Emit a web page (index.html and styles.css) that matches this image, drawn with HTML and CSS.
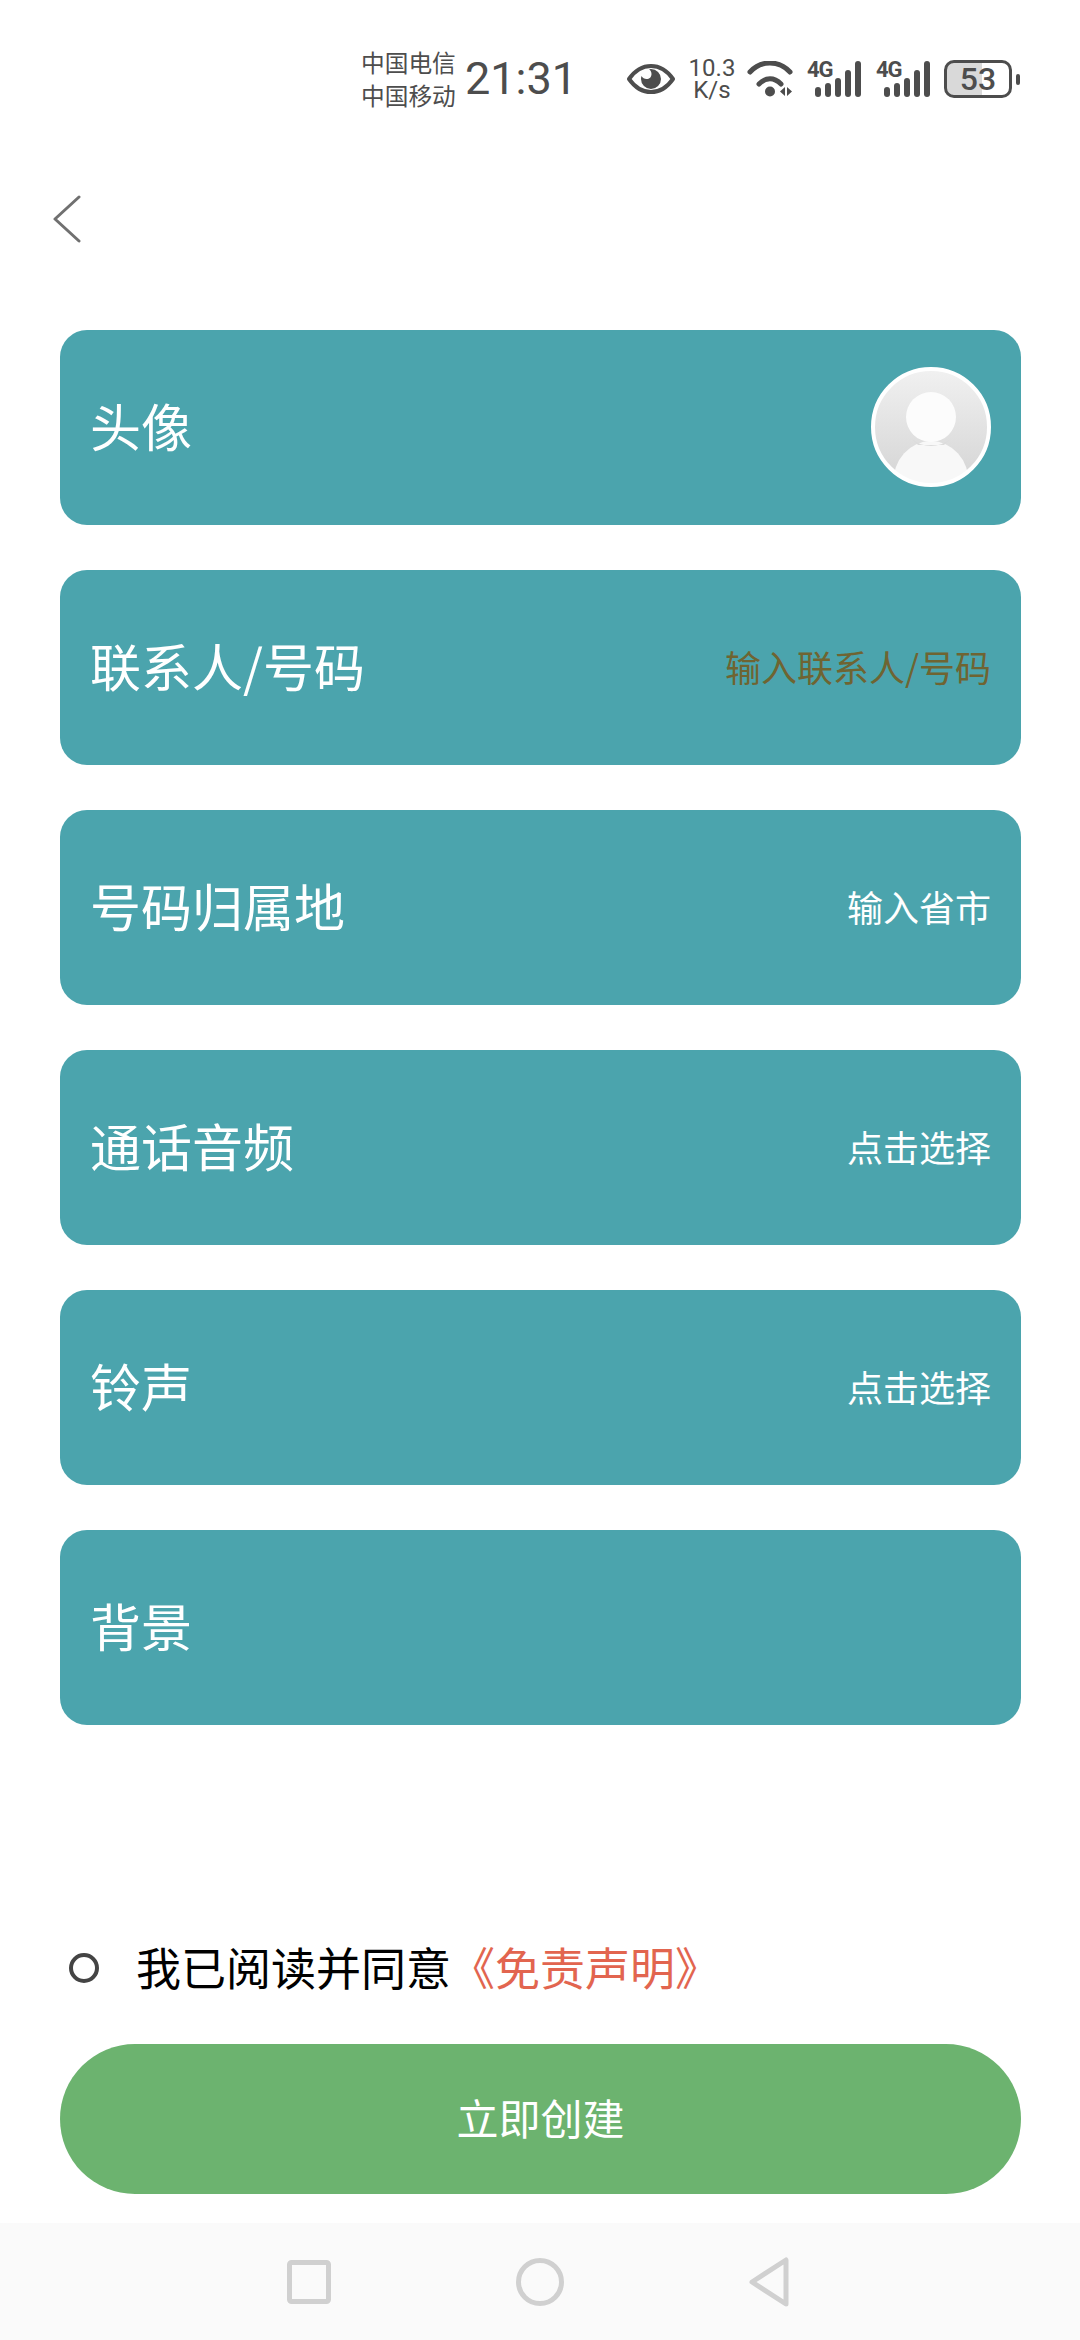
FILE: index.html
```html
<!DOCTYPE html>
<html lang="zh-CN">
<head>
  <meta charset="UTF-8" />
  <meta name="viewport" content="width=device-width, initial-scale=1.0"/>
  <title>立即创建</title>
  <link rel="stylesheet" href="styles.css">
</head>
<body>
  <div class="page">
    <div class="statusbar">
      <div class="carriers">
        <span>中国电信</span>
        <span>中国移动</span>
      </div>
      <div class="clock">21:31</div>
      <svg class="eye" width="48" height="30" viewBox="0 0 48 30">
        <path d="M2 15C9 5 16 2 24 2s15 3 22 13c-7 10-14 13-22 13S9 25 2 15z" fill="none" stroke="#4d4d4d" stroke-width="4" stroke-linejoin="round"/>
        <path d="M24 5a10 10 0 1 1-10 10c0-1 .2-2 .5-3 1 2 3 3 5 3 3 0 5-2 5-5 0-2-1-4-2.500-4.800z" fill="#4d4d4d"/>
      </svg>
      <div class="speed">
        <span>10.3</span>
        <span>K/s</span>
      </div>
      <svg class="wifi" width="46" height="36" viewBox="0 0 46 36">
        <path d="M3 11C14 -1 32 -1 43 11" fill="none" stroke="#4d4d4d" stroke-width="5" stroke-linecap="round"/>
        <path d="M12 23c7-7 15-7 22 0" fill="none" stroke="#4d4d4d" stroke-width="5" stroke-linecap="round"/>
        <circle cx="23" cy="30.500" r="5" fill="#4d4d4d"/>
        <path d="M38 26v9l-5-4.500zM40 26v9l5-4.500z" fill="#4d4d4d"/>
      </svg>
      <div class="signal">
        <span class="signal-label">4G</span>
        <div class="bars">
          <i class="bar bar-1"></i><i class="bar bar-2"></i><i class="bar bar-3"></i><i class="bar bar-4"></i><i class="bar bar-5"></i>
        </div>
      </div>
      <div class="signal">
        <span class="signal-label">4G</span>
        <div class="bars">
          <i class="bar bar-1"></i><i class="bar bar-2"></i><i class="bar bar-3"></i><i class="bar bar-4"></i><i class="bar bar-5"></i>
        </div>
      </div>
      <div class="battery">
        <div class="battery-body">53</div>
        <div class="battery-nub"></div>
      </div>
    </div>

    <div class="topbar">
      <svg width="30" height="48" viewBox="0 0 30 48">
        <path d="M27 2L3 24l24 22" fill="none" stroke="#707070" stroke-width="3" stroke-linecap="round" stroke-linejoin="round"/>
      </svg>
    </div>

    <div class="form">
      <div class="row">
        <span class="row-label">头像</span>
        <svg class="avatar" width="120" height="120" viewBox="0 0 120 120">
          <defs>
            <linearGradient id="avatarBg" x1="0" y1="0" x2="0" y2="1">
              <stop offset="0" stop-color="#f1f1f1"/>
              <stop offset="1" stop-color="#d4d4d4"/>
            </linearGradient>
            <clipPath id="avatarClip"><circle cx="60" cy="60" r="58"/></clipPath>
          </defs>
          <circle cx="60" cy="60" r="58" fill="url(#avatarBg)"/>
          <g clip-path="url(#avatarClip)">
            <ellipse cx="60" cy="116" rx="38" ry="42" fill="#f8f8f8"/>
            <path d="M41 72a29 29 0 0 0 38 0l-6 6h-26z" fill="#dcdcdc"/>
            <circle cx="60" cy="50" r="25" fill="#fcfcfc"/>
          </g>
          <circle cx="60" cy="60" r="58" fill="none" stroke="#fff" stroke-width="4"/>
        </svg>
      </div>
      <div class="row">
        <span class="row-label">联系人/号码</span>
        <span class="row-value row-hint">输入联系人/号码</span>
      </div>
      <div class="row">
        <span class="row-label">号码归属地</span>
        <span class="row-value">输入省市</span>
      </div>
      <div class="row">
        <span class="row-label">通话音频</span>
        <span class="row-value">点击选择</span>
      </div>
      <div class="row">
        <span class="row-label">铃声</span>
        <span class="row-value">点击选择</span>
      </div>
      <div class="row">
        <span class="row-label">背景</span>
      </div>
    </div>

    <div class="agree">
      <span class="agree-check"></span>
      <span class="agree-text">我已阅读并同意</span>
      <span class="agree-link">《免责声明》</span>
    </div>

    <button class="create">立即创建</button>

    <div class="navbar">
      <svg width="44" height="44" viewBox="0 0 44 44">
        <rect x="2.500" y="2.500" width="39" height="39" rx="2" fill="none" stroke="#d0d0d0" stroke-width="5"/>
      </svg>
      <svg width="48" height="48" viewBox="0 0 48 48">
        <circle cx="24" cy="24" r="21.500" fill="none" stroke="#d0d0d0" stroke-width="5"/>
      </svg>
      <svg width="40" height="50" viewBox="0 0 40 50">
        <path d="M37 3v44L3 25z" fill="none" stroke="#d0d0d0" stroke-width="5" stroke-linejoin="round"/>
      </svg>
    </div>
  </div>
</body>
</html>
```

FILE: styles.css
```css
* { box-sizing: border-box; }
body { margin: 0; background: #fff; font-family: "Noto Sans CJK SC", "Noto Sans", sans-serif; }
.page { width: 1080px; height: 2340px; display: flex; flex-direction: column; overflow: hidden; }

.statusbar { height: 120px; padding: 38px 0 0 361px; display: flex; align-items: center; color: #4d4d4d; }
.carriers { display: flex; flex-direction: column; font-size: 23.700px; line-height: 33px; width: 95px; white-space: nowrap; }
.clock { margin-left: 9px; width: 112px; font-family: Roboto, sans-serif; font-size: 45px; line-height: 50px; }
.eye { margin-left: 50px; }
.speed { margin-left: 15px; width: 44px; display: flex; flex-direction: column; align-items: center; font-family: Roboto, sans-serif; font-size: 24px; line-height: 22px; }
.wifi { margin-left: 13px; }
.signal { margin-left: 14px; width: 55px; height: 36px; position: relative; }
.signal-label { position: absolute; left: 0; top: -3px; font-family: Roboto, sans-serif; font-weight: 700; font-size: 22px; line-height: 24px; letter-spacing: -1px; }
.bars { position: absolute; left: 8px; bottom: 0; height: 36px; display: flex; align-items: flex-end; gap: 4px; }
.bar { display: block; width: 6px; background: #4d4d4d; border-radius: 3px; }
.bar-1 { height: 10px; }
.bar-2 { height: 14px; }
.bar-3 { height: 19px; }
.bar-4 { height: 27px; }
.bar-5 { height: 36px; }
.battery { margin-left: 13px; display: flex; align-items: center; gap: 4px; }
.battery-body { width: 68px; height: 38px; border: 3px solid #4d4d4d; border-radius: 10px; background: linear-gradient(to right, #d9d9d9 57%, #fff 57%); font-family: Roboto, sans-serif; font-weight: 500; font-size: 32px; line-height: 32px; text-align: center; }
.battery-nub { width: 4px; height: 11px; background: #4d4d4d; border-radius: 2px; }

.topbar { height: 210px; padding: 75px 0 0 52px; }

.form { display: flex; flex-direction: column; gap: 45px; padding: 0 59px 0 60px; }
.row { height: 195px; padding: 0 30px; background: #4ba4ad; border-radius: 27px; display: flex; align-items: center; justify-content: space-between; color: #fff; }
.row-label { font-size: 51px; margin-bottom: 6px; }
.row-value { font-size: 36px; margin-bottom: 3px; }
.row-hint { color: #6f6432; }
.avatar { margin-bottom: 2px; }

.agree { margin-top: 214px; height: 58px; padding-left: 69px; display: flex; align-items: center; font-size: 45px; color: #000; white-space: nowrap; }
.agree-check { width: 30px; height: 30px; border: 4px solid #444; border-radius: 50%; margin-right: 37px; }
.agree-text { margin-bottom: 3px; }
.agree-link { color: #e2654f; margin: 0 0 3px -1px; }

.create { margin: 47px 0 0 60px; width: 961px; height: 150px; padding: 0 0 6px; border: 0; border-radius: 75px; background: #6cb36f; color: #fff; font-family: inherit; font-size: 42px; }

.navbar { margin-top: 29px; flex: 1; background: #fafafa; display: flex; align-items: center; justify-content: center; gap: 185px; padding: 1px 4px 0 0; }
```
